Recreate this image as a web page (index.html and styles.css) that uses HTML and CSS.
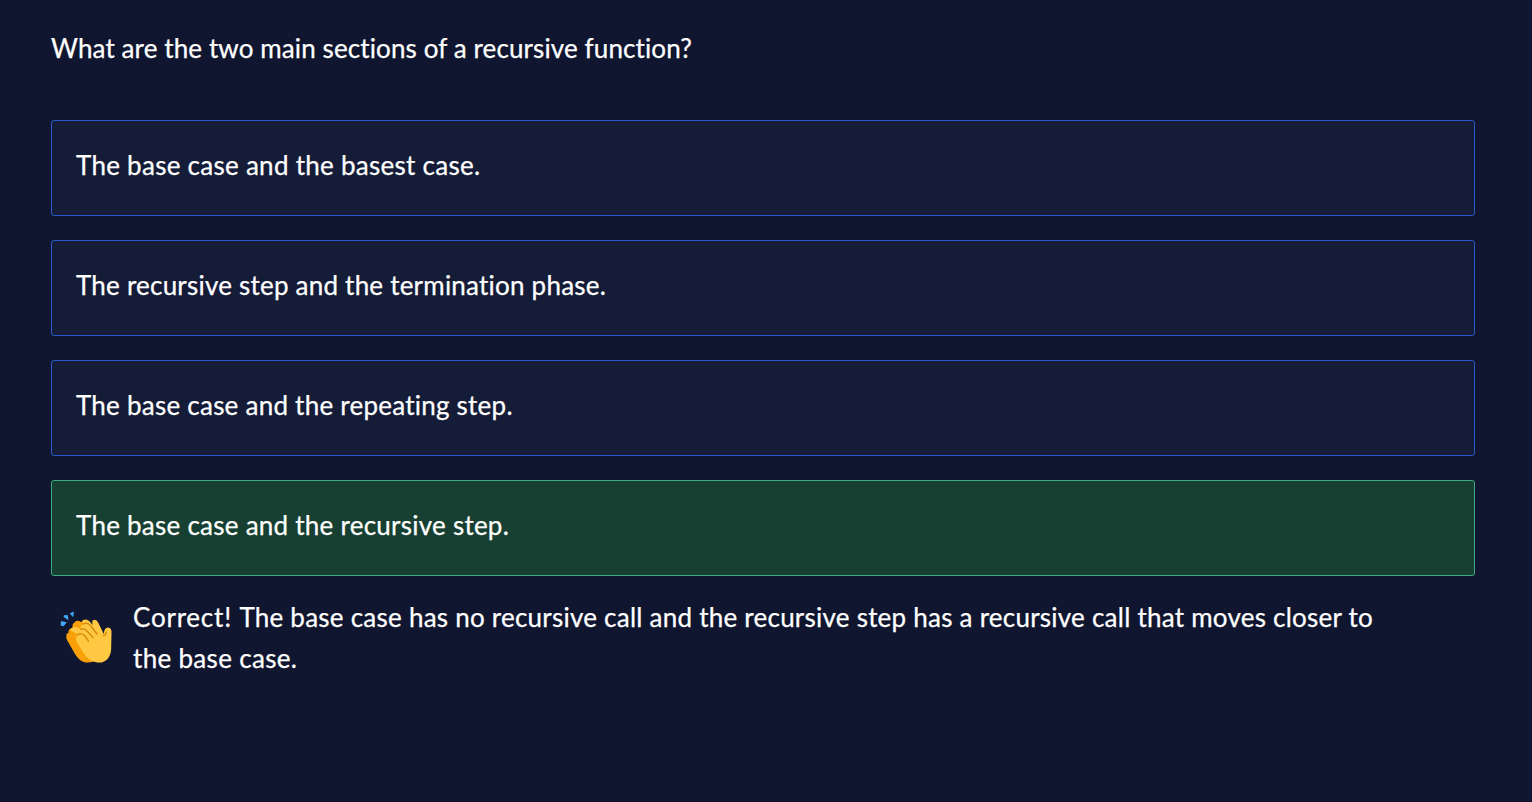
FILE: index.html
```html
<!DOCTYPE html>
<html lang="en">
<head>
<meta charset="utf-8">
<title>Recursion quiz</title>
<link rel="stylesheet" href="styles.css">
</head>
<body>
<main class="quiz">
  <h1 class="question"><span class="q-text">What are the two main sections of a recursive function?</span></h1>
  <div class="options">
    <div class="option"><span class="o1">The base case and the basest case.</span></div>
    <div class="option"><span class="o2">The recursive step and the termination phase.</span></div>
    <div class="option"><span class="o3">The base case and the repeating step.</span></div>
    <div class="option correct"><span class="o4">The base case and the recursive step.</span></div>
  </div>
  <div class="feedback">
    <svg class="clap" viewBox="0 0 54 54" width="54" height="54" aria-hidden="true">
      <path fill="#42a5f5" d="M2 11 7.8 12.2 4.6 16.2 1.6 15.6ZM4.8 5.2 8.8 5 9.6 10.2 4.6 7ZM10.6 3.4 14.9 1.4 14.3 7.2Z"/>
      <path fill="#f99f08" d="M7.5 26Q6.8 23.4 9.5 23Q9 18.4 13.7 17.7Q12.6 14.2 15.7 12.2Q18.3 9.6 22 12Q26 8.3 30 12L43 28 37 50Q33 53 26.6 52.5Q20 51 16 44L8.3 30.5Q6.5 28 7.5 26Z"/>
      <path fill="#ffc843" d="M18.2 25Q14.8 21 12 21.2Q11 17.7 15.5 17Q19 16.5 22 19.8Q20.6 14.8 24.5 14Q22 10.5 25 9.7Q28.8 8.5 32.2 13.3L34 15Q32 10.8 34.8 10Q37.4 9 39.5 13.2L44.8 24Q45.1 17.8 49 17.6Q53 17.6 52.5 24L52.1 40Q51.5 46 48 49.5Q43.5 54 36 52Q29 50 24.5 43L18.5 33.4Q15.8 28.5 18.2 25Z"/>
      <g fill="none" stroke="#d88b0a" stroke-width="1.5" stroke-linecap="round">
        <path d="M18.4 24.8Q22.5 22.2 26 26L29.5 31.2M22 19.4Q25 17.5 28 21L34 27.5M24.4 14Q28.5 12 31.5 15.5L38 24M44.2 25.6Q46.8 25.7 47.1 22.3"/>
      </g>
    </svg>
    <p class="message"><span class="lead">Correct! </span><span class="m1">The base case has no recursive call and the recursive step has a recursive call that moves closer to</span> <br><span class="m2">the base case.</span></p>
  </div>
</main>
</body>
</html>
```
FILE: styles.css
```css
* { box-sizing: border-box; }
body {
  margin: 0;
  background: #10162f;
  color: #fff;
  font-family: Lato, "Liberation Sans", sans-serif;
  font-size: 26px;
  line-height: 41px;
  font-variant-ligatures: none;
  -webkit-text-stroke: 0.25px currentColor;
}
.quiz {
  min-height: 802px;
  padding: 28px 57px 0 51px;
  border-bottom: 1px solid #0c1126;
}
.question {
  margin: 0 0 51px;
  font: inherit;
}
.options {
  display: flex;
  flex-direction: column;
  gap: 24px;
}
.option {
  height: 96px;
  padding: 24px;
  background: #151c38;
  border: 1px solid #2b59cb;
  border-radius: 3px;
}
.correct {
  background: #174032;
  border-color: #37ad80;
}
.q-text { letter-spacing: 0.11px; }
.o1 { letter-spacing: 0.27px; }
.o2 { letter-spacing: 0.22px; }
.o3 { letter-spacing: 0.24px; }
.o4 { letter-spacing: 0.25px; }
.lead { letter-spacing: 0.78px; }
.m1 { letter-spacing: 0.24px; }
.m2 { letter-spacing: 0.32px; }
.feedback {
  display: flex;
  gap: 20px;
  margin-top: 21px;
  padding-left: 8px;
}
.clap {
  flex: none;
  margin-top: 13px;
}
.message {
  margin: 0;
  white-space: nowrap;
}
```
